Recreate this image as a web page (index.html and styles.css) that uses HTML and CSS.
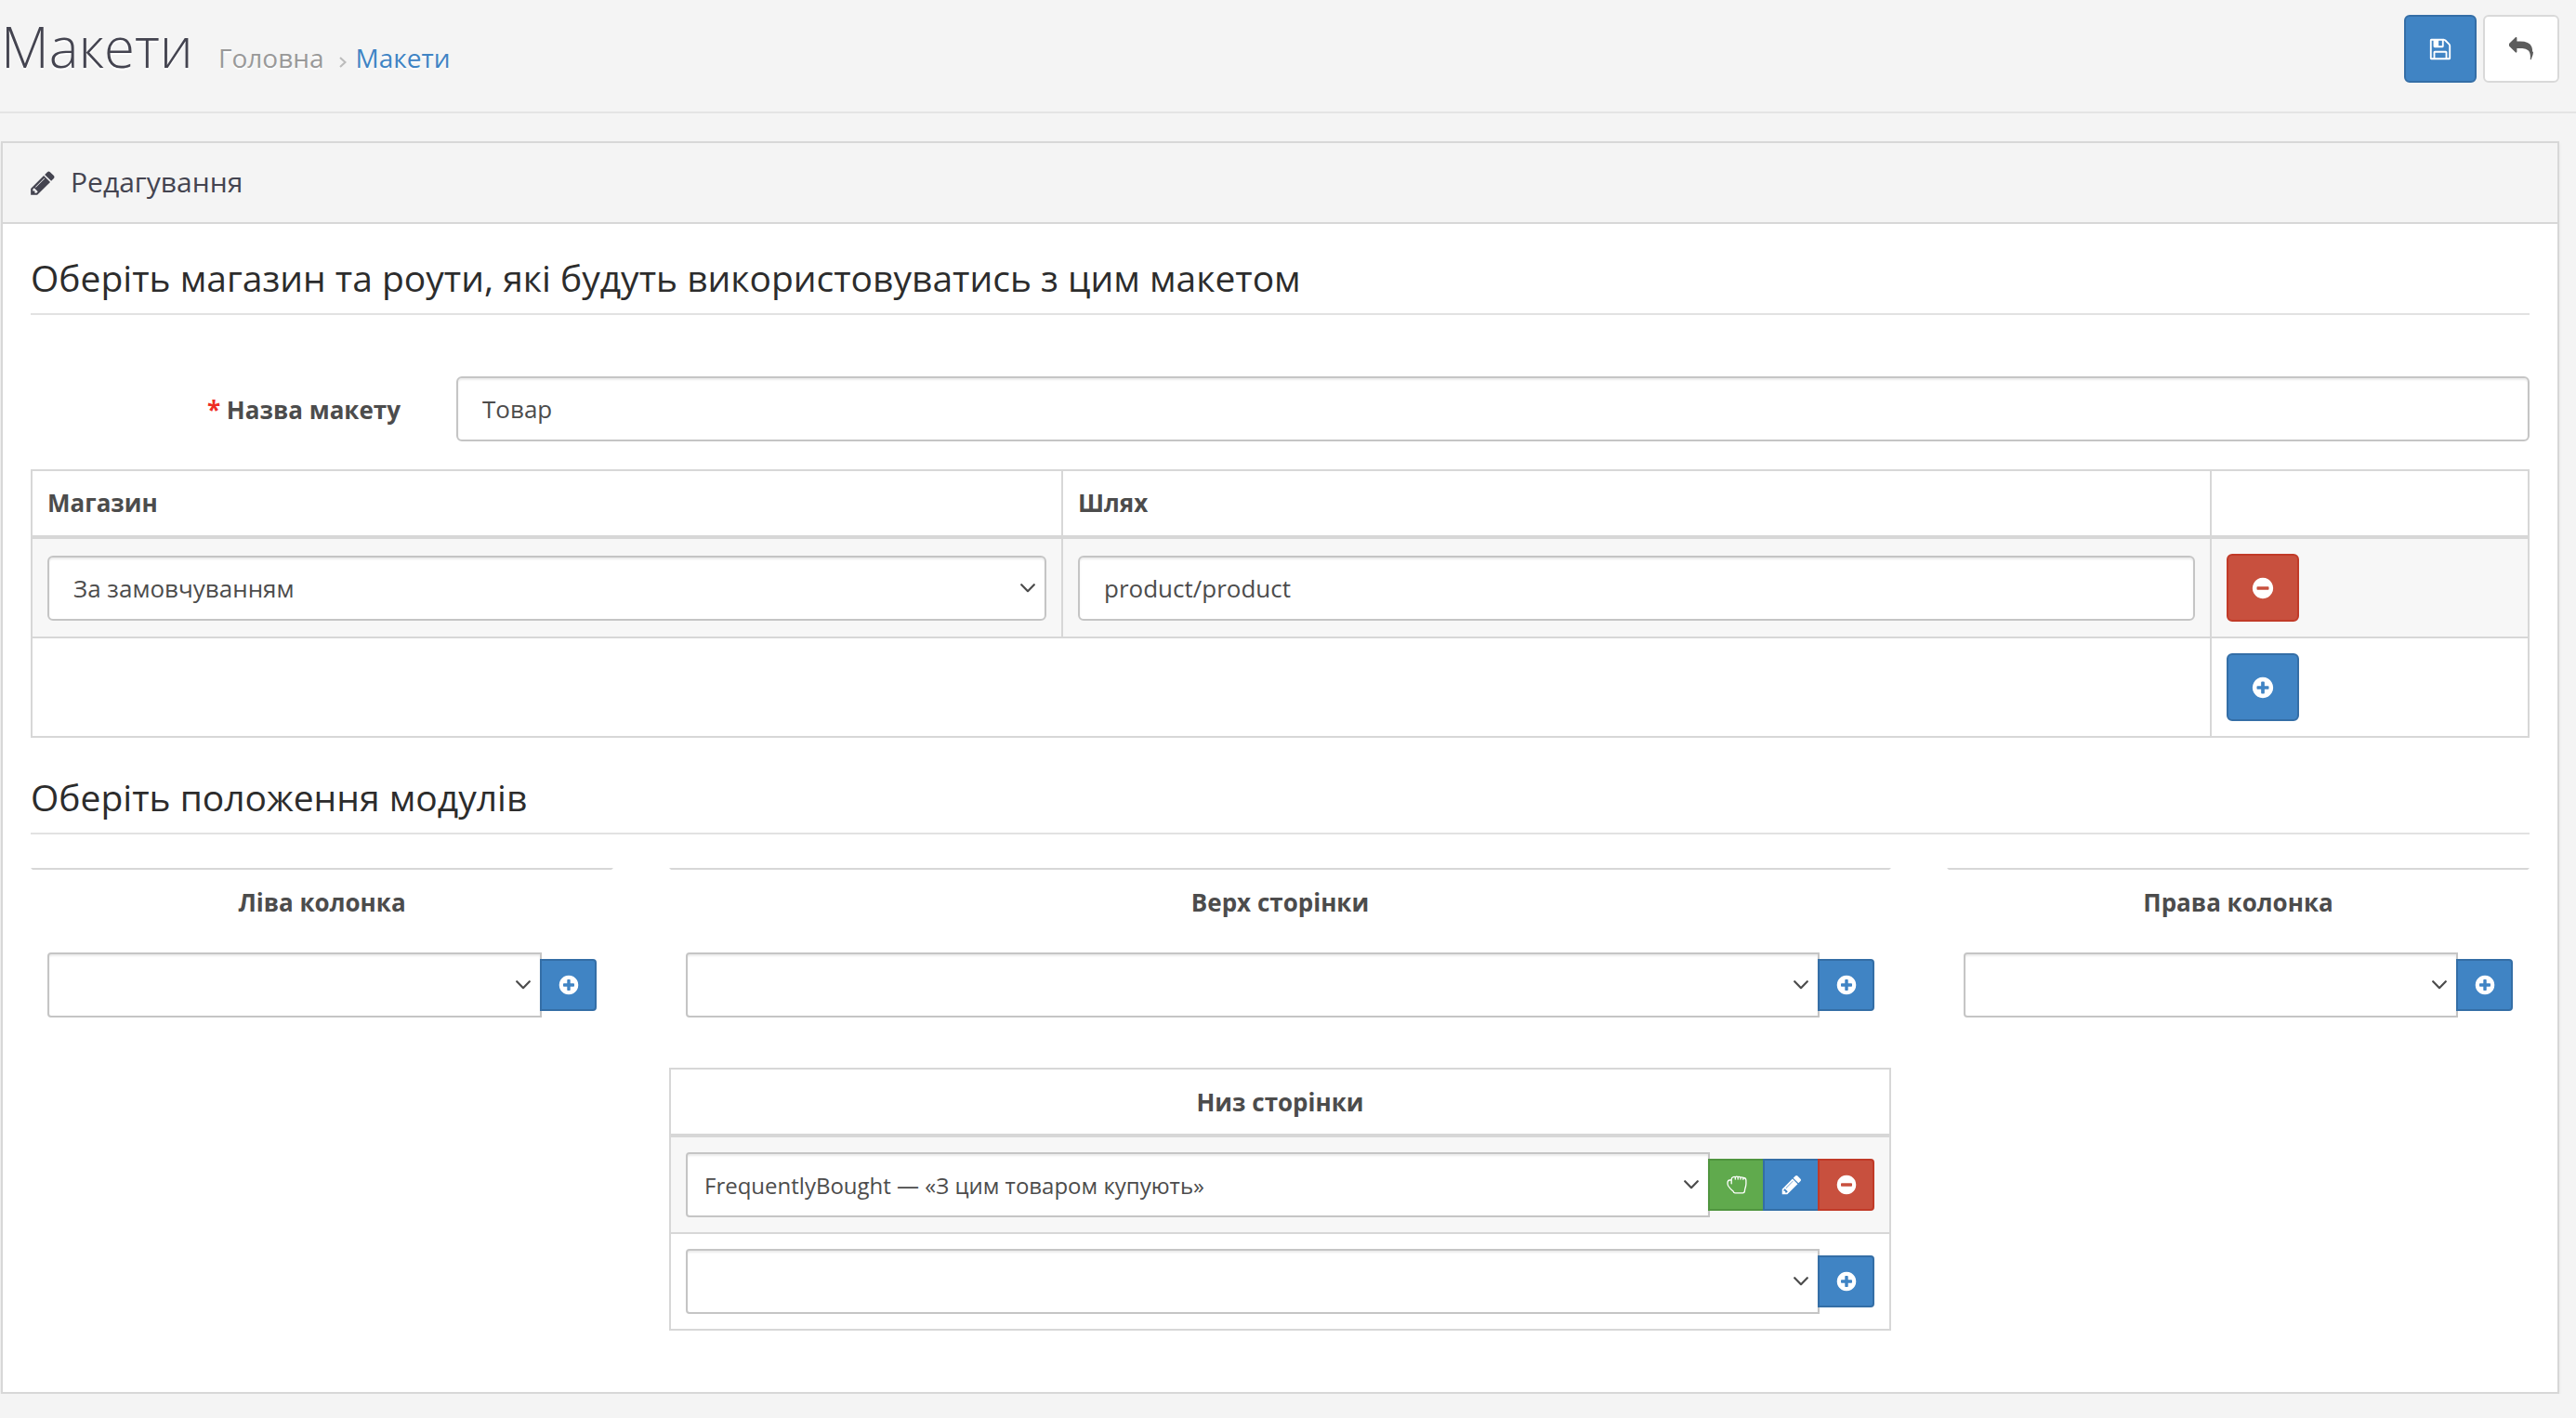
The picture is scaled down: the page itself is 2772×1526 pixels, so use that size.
FILE: index.html
```html
<!DOCTYPE html>
<html lang="uk">
  <head>
    <meta charset="UTF-8" />
    <meta name="viewport" content="width=device-width, initial-scale=1.0" />
    <title>Макети</title>
    <link rel="stylesheet" href="styles.css">
  </head>

  <body>
    <!-- icon set -->
    <svg class="sprite" xmlns="http://www.w3.org/2000/svg">
      <symbol id="i-save" viewBox="0 0 1792 1792"><path d="M512 1536h768v-384h-768v384zm896 0h128v-896q0-14-10-38.5t-20-34.5l-281-281q-10-10-34-20t-39-10v416q0 40-28 68t-68 28h-576q-40 0-68-28t-28-68v-416h-128v1280h128v-416q0-40 28-68t68-28h832q40 0 68 28t28 68v416zm-384-928v-320q0-13-9.5-22.5t-22.5-9.5h-192q-13 0-22.5 9.5t-9.5 22.5v320q0 13 9.5 22.5t22.5 9.5h192q13 0 22.5-9.5t9.5-22.5zm640 32v928q0 40-28 68t-68 28h-1344q-40 0-68-28t-28-68v-1344q0-40 28-68t68-28h928q40 0 88 20t76 48l280 280q28 28 48 76t20 88z"/></symbol>
      <symbol id="i-reply" viewBox="0 0 1792 1792"><path d="M1792 1120q0 166-127 451-3 7-10.500 24t-13.500 30-13 22q-12 17-28 17-15 0-23.500-10t-8.500-25q0-9 2.500-26.500t2.500-23.500q5-68 5-123 0-112-19.500-200.500t-54-153.500-89-112-115-78.500-144.500-50.500-165-26-188-8h-224v256q0 26-19 45t-45 19-45-19l-512-512q-19-19-19-45t19-45l512-512q19-19 45-19t45 19 19 45v256h224q713 0 875 403 53 134 53 333z"/></symbol>
      <symbol id="i-pencil" viewBox="0 0 1792 1792"><path d="M491 1536l91-91-235-235-91 91v107h128v128h107zm523-928q0-22-22-22-10 0-17 7l-542 542q-7 7-7 17 0 22 22 22 10 0 17-7l542-542q7-7 7-17zm-54-192l416 416-832 832h-416v-416zm683 96q0 53-37 90l-166 166-416-416 166-165q36-38 90-38 53 0 91 38l235 234q37 39 37 91z"/></symbol>
      <symbol id="i-plus" viewBox="0 0 1792 1792"><path d="M1344 960v-128q0-26-19-45t-45-19h-256v-256q0-26-19-45t-45-19h-128q-26 0-45 19t-19 45v256h-256q-26 0-45 19t-19 45v128q0 26 19 45t45 19h256v256q0 26 19 45t45 19h128q26 0 45-19t19-45v-256h256q26 0 45-19t19-45zm320-64q0 209-103 385.500t-279.500 279.500-385.500 103-385.500-103-279.500-279.500-103-385.500 103-385.500 279.500-279.500 385.500-103 385.500 103 279.500 279.500 103 385.500z"/></symbol>
      <symbol id="i-minus" viewBox="0 0 1792 1792"><path d="M1344 960v-128q0-26-19-45t-45-19h-768q-26 0-45 19t-19 45v128q0 26 19 45t45 19h768q26 0 45-19t19-45zm320-64q0 209-103 385.500t-279.500 279.500-385.500 103-385.500-103-279.500-279.500-103-385.500 103-385.500 279.500-279.500 385.500-103 385.500 103 279.500 279.500 103 385.500z"/></symbol>
      <symbol id="i-hand" viewBox="-1 -1 24 23"><path d="M5.200 9.300V4.500Q5.200 2.700 6.800 2.300Q8 1.400 9.300 2.200Q10.700 1.200 12.200 2.100Q13.700 1.400 15 2.500Q16.500 2 17.800 3Q20.600 2.800 20.900 5.500V9.500Q20.800 12 19.900 14.500Q19.500 16 19.300 18Q19 19.300 17.500 19.300H9Q7.300 19.200 7.300 17.800Q3.500 14.500 1.900 12Q1 10.500 1 8.500Q1 5.900 3 5.500H5.200M9.300 2.500V4.500M12.200 2.500V4.500M15 2.800V4.500M17.800 3.300V4.800" fill="none" stroke="currentColor" stroke-width="1.300" stroke-linejoin="round" stroke-linecap="round"/></symbol>
      <symbol id="i-chevron" viewBox="0 0 16 10"><path d="M1.200 1.200L8 8.200L14.800 1.200" fill="none" stroke="currentColor" stroke-width="2.200" stroke-linecap="round" stroke-linejoin="round"/></symbol>
    </svg>

    <div class="page-header">
      <h1>Макети</h1>
      <ul class="breadcrumb">
        <li><a href="#">Головна</a></li>
        <li><svg class="sep" viewBox="0 0 8 12"><path d="M1 1l5.500 5l-5.500 5"/></svg><a class="current" href="#">Макети</a></li>
      </ul>
      <div class="actions">
        <button class="btn btn-primary"><svg><use href="#i-save"/></svg></button>
        <a class="btn btn-default" href="#"><svg><use href="#i-reply"/></svg></a>
      </div>
    </div>

    <div class="panel">
      <div class="panel-heading">
        <svg><use href="#i-pencil"/></svg>
        <h3>Редагування</h3>
      </div>
      <div class="panel-body">
        <h2 class="legend">Оберіть магазин та роути, які будуть використовуватись з цим макетом</h2>

        <div class="form-group">
          <label for="input-name"><span class="required">*</span> Назва макету</label>
          <input class="form-control" id="input-name" type="text" value="Товар">
        </div>

        <table class="table routes">
          <thead>
            <tr>
              <th class="col-store">Магазин</th>
              <th class="col-route">Шлях</th>
              <th></th>
            </tr>
          </thead>
          <tbody>
            <tr class="striped">
              <td><div class="form-control select"><span>За замовчуванням</span><svg><use href="#i-chevron"/></svg></div></td>
              <td><input class="form-control" type="text" value="product/product"></td>
              <td><button class="btn btn-danger"><svg><use href="#i-minus"/></svg></button></td>
            </tr>
            <tr>
              <td colspan="2"></td>
              <td><button class="btn btn-primary"><svg><use href="#i-plus"/></svg></button></td>
            </tr>
          </tbody>
        </table>

        <h2 class="legend">Оберіть положення модулів</h2>

        <div class="positions">
          <div class="module bare">
            <div class="module-head">Ліва колонка</div>
            <div class="module-row">
              <div class="form-control select"><span></span><svg><use href="#i-chevron"/></svg></div>
              <button class="btn btn-sm btn-primary"><svg><use href="#i-plus"/></svg></button>
            </div>
          </div>

          <div class="middle">
            <div class="module bare">
              <div class="module-head">Верх сторінки</div>
              <div class="module-row">
                <div class="form-control select"><span></span><svg><use href="#i-chevron"/></svg></div>
                <button class="btn btn-sm btn-primary"><svg><use href="#i-plus"/></svg></button>
              </div>
            </div>

            <div class="module">
              <div class="module-head">Низ сторінки</div>
              <div class="module-row striped">
                <div class="form-control select"><span>FrequentlyBought — «З цим товаром купують»</span><svg><use href="#i-chevron"/></svg></div>
                <button class="btn btn-sm btn-success"><svg><use href="#i-hand"/></svg></button>
                <button class="btn btn-sm btn-primary"><svg><use href="#i-pencil"/></svg></button>
                <button class="btn btn-sm btn-danger"><svg><use href="#i-minus"/></svg></button>
              </div>
              <div class="module-row">
                <div class="form-control select"><span></span><svg><use href="#i-chevron"/></svg></div>
                <button class="btn btn-sm btn-primary"><svg><use href="#i-plus"/></svg></button>
              </div>
            </div>
          </div>

          <div class="module bare">
            <div class="module-head">Права колонка</div>
            <div class="module-row">
              <div class="form-control select"><span></span><svg><use href="#i-chevron"/></svg></div>
              <button class="btn btn-sm btn-primary"><svg><use href="#i-plus"/></svg></button>
            </div>
          </div>
        </div>
      </div>
    </div>
  </body>
</html>
```

FILE: styles.css
```css
* {
  box-sizing: border-box;
}

body {
  margin: 0;
  background: #f4f4f4;
  color: #4c4c4c;
  font-family: "Open Sans", "Noto Sans", sans-serif;
  font-size: 26px;
  line-height: 37px;
}

h1,
h2,
h3,
ul {
  margin: 0;
  padding: 0;
  font-weight: 400;
}

a {
  text-decoration: none;
}

.sprite {
  display: none;
}

/* header */
.page-header {
  display: flex;
  align-items: baseline;
  height: 122px;
  padding: 16px 18px 0 1px;
  border-bottom: 2px solid #e4e4e4;
}

.page-header h1 {
  color: #444450;
  font-size: 60px;
  font-weight: 300;
  line-height: 68px;
  text-shadow: 0 2px #fff;
}

.breadcrumb {
  display: flex;
  padding-left: 27px;
  list-style: none;
  font-size: 28px;
  text-shadow: 0 2px #fff;
}

.breadcrumb a {
  color: #999;
}

.breadcrumb a.current {
  color: #3f84c4;
}

.sep {
  width: 8px;
  height: 12px;
  margin: 0 10px 0 16px;
  fill: none;
  stroke: #bbb;
  stroke-width: 2;
}

.actions {
  display: flex;
  align-self: flex-start;
  gap: 7px;
  margin-left: auto;
}

/* buttons */
.btn {
  display: flex;
  align-items: center;
  justify-content: center;
  width: 78px;
  height: 73px;
  padding: 0;
  border: 2px solid;
  border-radius: 6px;
  color: #fff;
}

.btn svg {
  width: 26px;
  height: 26px;
  fill: currentColor;
}

.btn-primary {
  background: #4084c4;
  border-color: #346ea6;
}

.btn-danger {
  background: #c8503e;
  border-color: #c13a28;
}

.btn-success {
  background: #60aa4d;
  border-color: #50953f;
}

.btn-default {
  width: 82px;
  background: #fff;
  border-color: #d9d9d9;
  color: #5c5c5c;
}

.btn-sm {
  flex: none;
  width: 61px;
  height: 56px;
  margin-left: -2px;
  border-radius: 0;
}

.btn-sm:last-child {
  border-radius: 0 4px 4px 0;
}

.btn-sm svg {
  width: 24px;
  height: 24px;
}

/* panel */
.panel {
  height: 1348px;
  margin: 30px 18px 0 1px;
  border: 2px solid #d7d7d7;
  background: #fff;
  box-shadow: 0 2px 4px rgba(0, 0, 0, 0.06);
}

.panel-heading {
  display: flex;
  align-items: center;
  height: 87px;
  padding-left: 28px;
  border-bottom: 2px solid #d7d7d7;
  background: #f4f4f4;
  color: #444450;
}

.panel-heading svg {
  width: 30px;
  height: 30px;
  margin-right: 15px;
  fill: currentColor;
}

.panel-heading h3 {
  padding-bottom: 2px;
  font-size: 30px;
}

.panel-body {
  padding: 30px;
}

.legend {
  height: 68px;
  border-bottom: 2px solid #e2e2e2;
  color: #2c2c2c;
  font-size: 39px;
  line-height: 56px;
}

/* form */
.form-group {
  display: flex;
  align-items: center;
  margin: 66px 0 30px;
}

.form-group label {
  width: 458px;
  padding: 2px 60px 0 0;
  font-weight: 700;
  text-align: right;
}

.required {
  color: #ee2c24;
}

.form-control {
  flex: 1;
  display: block;
  width: 100%;
  min-width: 0;
  height: 70px;
  padding: 0 26px;
  border: 2px solid #c5c5c5;
  border-radius: 6px;
  background: #fff;
  box-shadow: inset 0 2px 2px rgba(0, 0, 0, 0.08);
  color: #4c4c4c;
  font: inherit;
}

.select {
  display: flex;
  align-items: center;
  justify-content: space-between;
  padding-right: 10px;
}

.select svg {
  width: 16px;
  height: 10px;
}

/* routes table */
.table {
  width: 100%;
  border-collapse: collapse;
  table-layout: fixed;
}

.table th,
.table td {
  height: 107px;
  padding: 16px;
  border: 2px solid #d7d7d7;
}

.table td .select span {
  padding-top: 2px;
}

.table th {
  height: 72px;
  padding: 15px 16px;
  border-bottom-width: 4px;
  text-align: left;
}

.col-store {
  width: 1109px;
}

.col-route {
  width: 1236px;
}

.striped {
  background: #f7f7f7;
}

.routes {
  margin-bottom: 36px;
}

/* module positions */
.positions {
  display: grid;
  grid-template-columns: 627px 1315px 627px;
  justify-content: space-between;
  align-items: start;
  margin-top: 36px;
}

.module {
  border: 2px solid #d7d7d7;
}

.module-head {
  height: 73px;
  padding: 17px 16px 15px;
  border-bottom: 4px solid #d7d7d7;
  font-weight: 700;
  text-align: center;
}

.module-row {
  display: flex;
  align-items: center;
  height: 102px;
  padding: 0 16px;
}

.module-row + .module-row {
  height: 104px;
  border-top: 2px solid #d7d7d7;
}

.module-row .form-control {
  padding-left: 18px;
  border-radius: 4px 0 0 4px;
  font-size: 24px;
}

.bare {
  margin-bottom: 36px;
  border-color: #d7d7d7 transparent transparent;
}

.bare .module-head {
  border-color: transparent;
}
```
